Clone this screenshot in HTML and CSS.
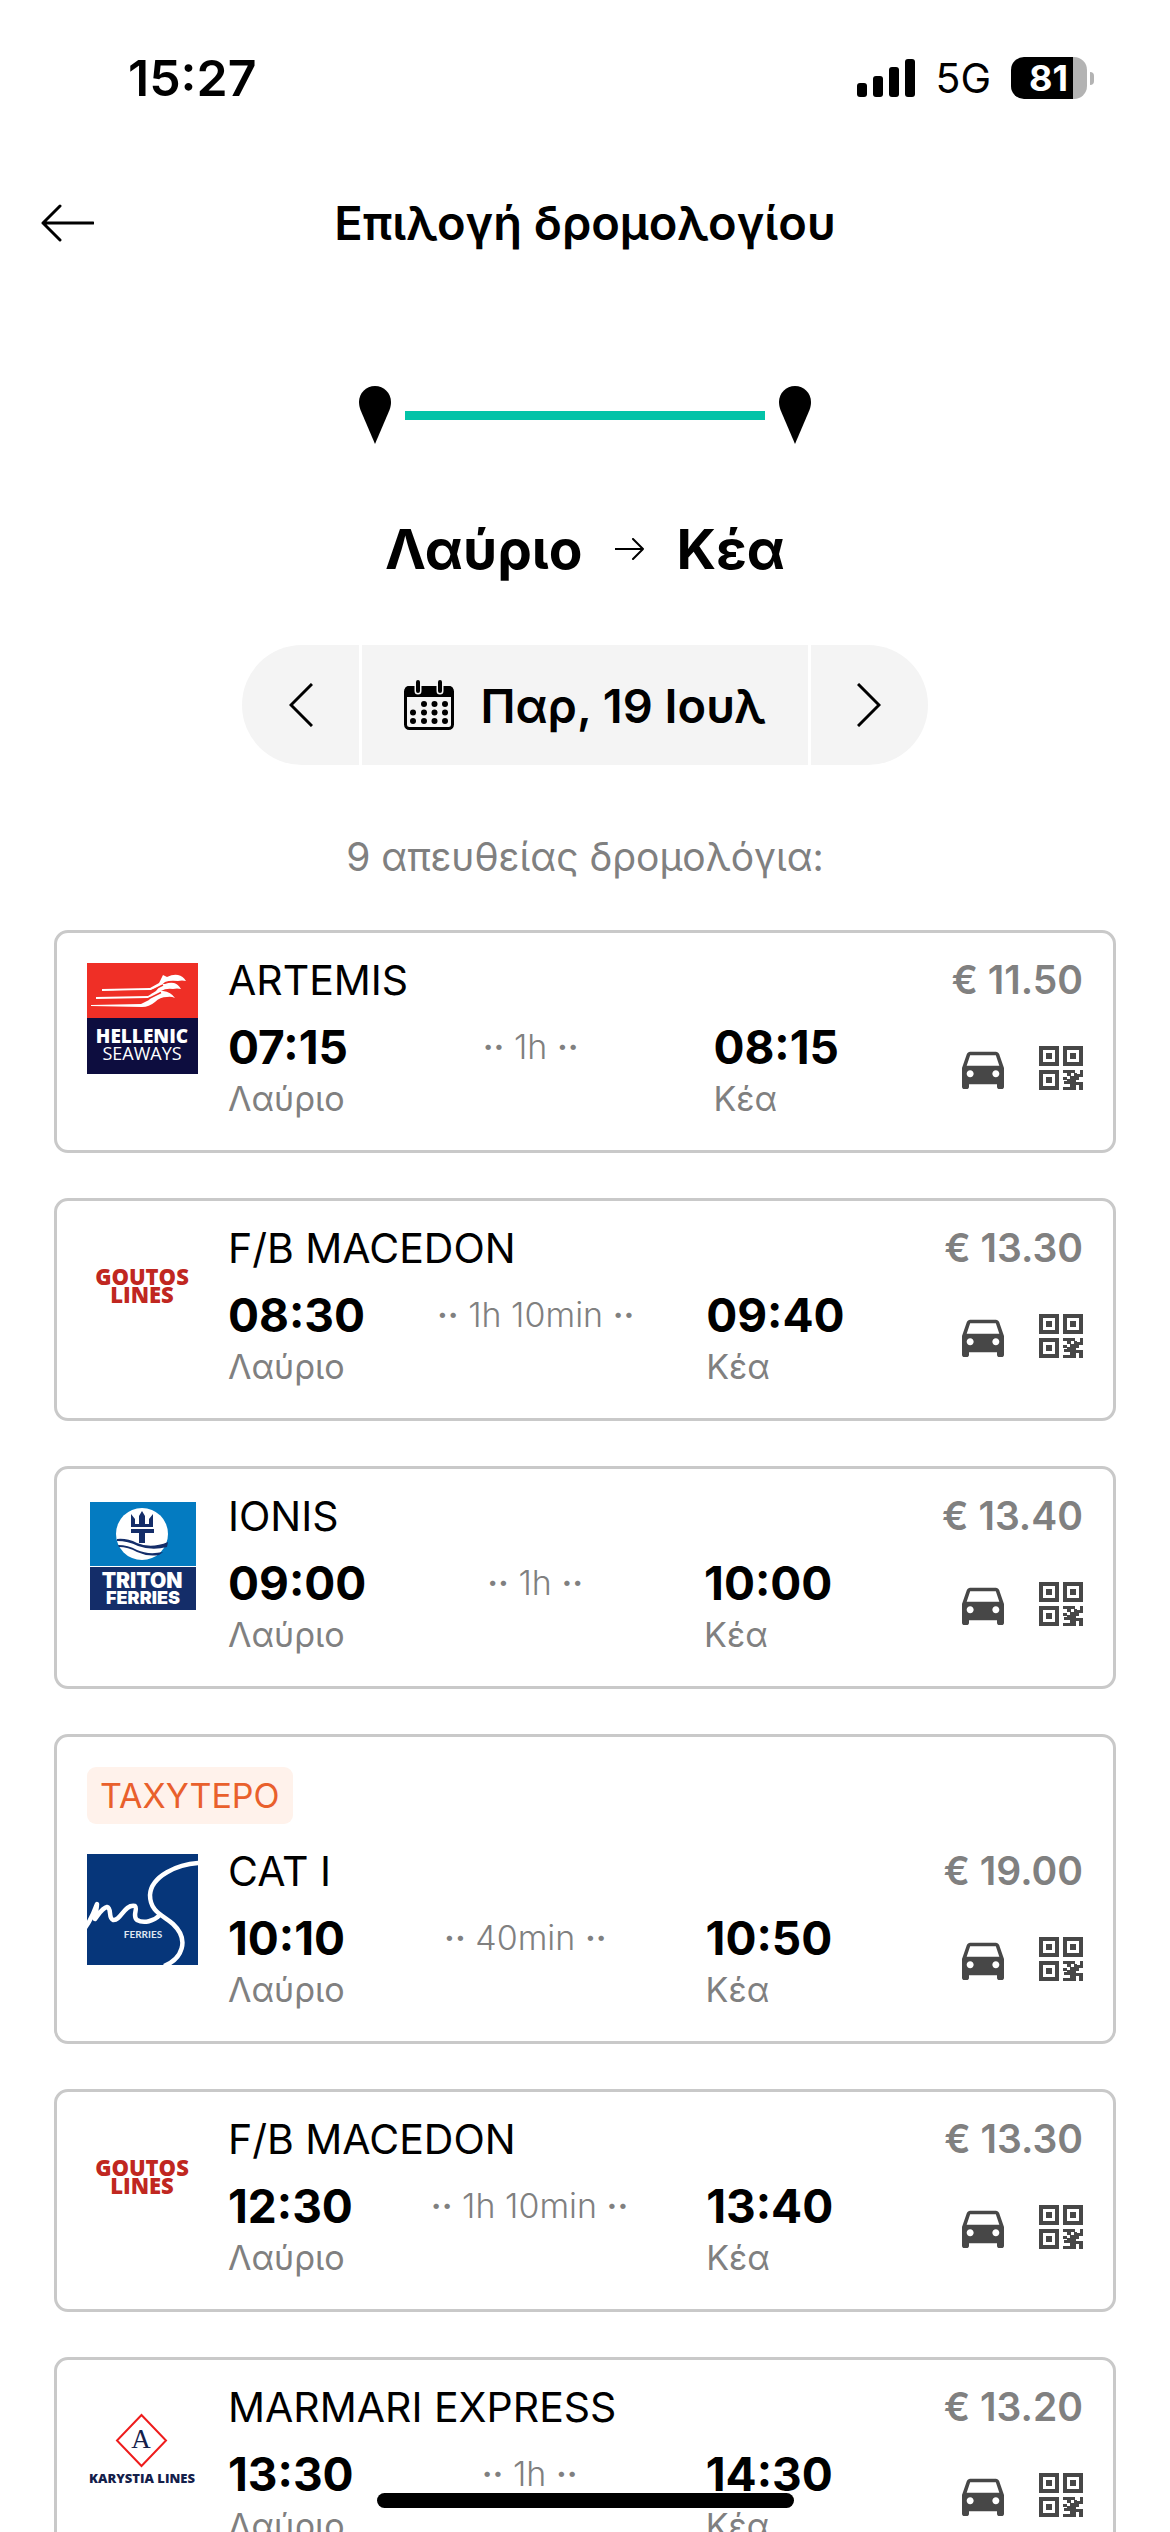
FILE: index.html
```html
<!DOCTYPE html>
<html lang="el">
<head>
<meta charset="utf-8">
<meta name="viewport" content="width=device-width, initial-scale=1">
<title>Επιλογή δρομολογίου</title>
<link rel="stylesheet" href="styles.css">
</head>
<body>
<svg class="sprite" aria-hidden="true">
  <symbol id="car" viewBox="0 0 24 24"><path d="M18.92 6.01C18.72 5.42 18.16 5 17.5 5h-11c-.66 0-1.21.42-1.42 1.01L3 12v8c0 .55.45 1 1 1h1c.55 0 1-.45 1-1v-1h12v1c0 .55.45 1 1 1h1c.55 0 1-.45 1-1v-8l-2.08-5.99zM6.5 16c-.83 0-1.5-.67-1.5-1.5S5.67 13 6.5 13s1.5.67 1.5 1.5S7.33 16 6.5 16zm11 0c-.83 0-1.5-.67-1.5-1.5s.67-1.5 1.5-1.5 1.5.67 1.5 1.5-.67 1.5-1.5 1.5zM5 11l1.500-4.500h11L19 11H5z"/></symbol>
  <symbol id="qr" viewBox="0 0 44 44">
    <path fill-rule="evenodd" d="M0 0h20v20H0zM4 4v12h12V4zM7 7h6v6H7zM24 0h20v20H24zM28 4v12h12V4zM31 7h6v6h-6zM0 24h20v20H0zM4 28v12h12V28zM7 31h6v6H7z"/>
    <path d="M24 24h12v3h2v1h3v-4h3v7h-4v3h-3v2h7v8h-4v-5h-3v5H24v-3h7v-3h-6v-3h3v-2h3v-3h4v-3h-3v3h-4v-3h-4zM24 31h4v3h-4z"/>
  </symbol>
</svg>

<div class="app">
  <div class="status">
    <span class="status-time">15:27</span>
    <div class="status-right">
      <svg class="signal" viewBox="0 0 58 38"><rect x="0" y="24" width="10" height="14" rx="3"/><rect x="16" y="17" width="10" height="21" rx="3"/><rect x="32" y="8" width="10" height="30" rx="3"/><rect x="48" y="0" width="10" height="38" rx="3"/></svg>
      <span class="network">5G</span>
      <div class="battery"><span class="battery-body">81</span><span class="battery-tip"></span></div>
    </div>
  </div>

  <header class="header">
    <button class="back" type="button" aria-label="Πίσω"><svg class="back-icon" viewBox="0 0 54 38"><path d="M53 19H3M20 2 3 19l17 17"/></svg></button>
    <h1 class="title">Επιλογή δρομολογίου</h1>
  </header>

  <main class="main">
    <div class="progress">
      <svg class="pin" viewBox="0 0 32 58"><path d="M16 0C7 0 0 7 0 16c0 3 .5 5 1.500 8L16 58l14.500-34c1-3 1.500-5 1.500-8C32 7 25 0 16 0z"/></svg>
      <span class="progress-line"></span>
      <svg class="pin" viewBox="0 0 32 58"><path d="M16 0C7 0 0 7 0 16c0 3 .5 5 1.500 8L16 58l14.500-34c1-3 1.500-5 1.500-8C32 7 25 0 16 0z"/></svg>
    </div>

    <h2 class="route">
      <span>Λαύριο</span>
      <svg class="route-arrow" viewBox="0 0 30 22"><path d="M0 11h28M18 1l10 10-10 10"/></svg>
      <span>Κέα</span>
    </h2>

    <div class="dates">
      <button class="date-step" type="button" aria-label="Προηγούμενη ημέρα"><svg class="chevron" viewBox="0 0 24 44"><path d="M23 1 2 22l21 21"/></svg></button>
      <button class="date-pick" type="button">
        <svg class="calendar" viewBox="0 0 50 50">
          <rect x="1.500" y="7.500" width="47" height="41" rx="4" fill="none" stroke="#000" stroke-width="3"/>
          <path d="M1 17V10q0-4 4-4h40q4 0 4 4v7z"/>
          <path d="M14 2v9M36 2v9" stroke="#f4f4f4" stroke-width="7" stroke-linecap="round"/>
          <path d="M14 2v9M36 2v9" stroke="#000" stroke-width="4" stroke-linecap="round"/>
          <g><circle cx="20" cy="24" r="3"/><circle cx="30.500" cy="24" r="3"/><circle cx="41" cy="24" r="3"/><circle cx="9" cy="32.500" r="3"/><circle cx="20" cy="32.500" r="3"/><circle cx="30.500" cy="32.500" r="3"/><circle cx="41" cy="32.500" r="3"/><circle cx="9" cy="41" r="3"/><circle cx="20" cy="41" r="3"/><circle cx="30.500" cy="41" r="3"/><circle cx="41" cy="41" r="3"/></g>
        </svg>
        <span>Παρ, 19 Ιουλ</span>
      </button>
      <button class="date-step" type="button" aria-label="Επόμενη ημέρα"><svg class="chevron" viewBox="0 0 24 44"><path d="m1 1 21 21L1 43"/></svg></button>
    </div>

    <p class="count">9 απευθείας δρομολόγια:</p>

    <ul class="trips">
      <li><a class="card" href="#artemis"><div class="trip">
        <svg class="logo" viewBox="0 0 111 111" role="img" aria-label="Hellenic Seaways">
          <rect width="111" height="56" fill="#ef2f26"/><rect y="55" width="111" height="56" fill="#0d0d3f"/>
          <g fill="#fff">
            <path d="M15 26l48-1 9-5q3-6 3-6l1-2 4 2q6-3 11-2 5 1 8 6-4-1-8 0-8-1-13 1-6 6-14 8l-49 1z"/>
            <path d="M9 34l52-1 8-5q3-3 4-7l5 0q5-2 9-1 4 1 7 6-4-1-8 0-7-1-12 2-6 5-13 7l-52 1z"/>
            <path d="M4 42l50-1 8-4q3-4 2-6 6-1 8-3 3 0 4 0 8 1 12 7-4-2-8-1-7 0-12 5-6 5-13 5l-51-1z"/>
          </g>
          <path d="M13 29l51-1 12-6M8 37.500l52-1 14-7" stroke="#ef2f26" stroke-width="1.500" fill="none"/>
          <g class="logo-hellenic"><text class="logo-strong" x="55" y="80">HELLENIC</text><text x="55" y="97">SEAWAYS</text></g>
        </svg>
        <div class="info">
          <h3 class="ship">ARTEMIS</h3>
          <div class="times">
            <div><time class="time">07:15</time><span class="port">Λαύριο</span></div>
            <span class="duration"><b>··</b> 1h <b>··</b></span>
            <div class="arrival"><time class="time">08:15</time><span class="port">Κέα</span></div>
          </div>
        </div>
        <div class="side"><span class="price">€ 11.50</span><span class="features"><svg class="car"><use href="#car"/></svg><svg class="qr"><use href="#qr"/></svg></span></div>
      </div></a></li>

      <li><a class="card" href="#macedon-0830"><div class="trip">
        <svg class="logo logo-goutos" viewBox="0 0 111 111" role="img" aria-label="Goutos Lines"><text x="55" y="54">GOUTOS</text><text x="55" y="72">LINES</text></svg>
        <div class="info">
          <h3 class="ship">F/B MACEDON</h3>
          <div class="times">
            <div><time class="time">08:30</time><span class="port">Λαύριο</span></div>
            <span class="duration"><b>··</b> 1h 10min <b>··</b></span>
            <div class="arrival"><time class="time">09:40</time><span class="port">Κέα</span></div>
          </div>
        </div>
        <div class="side"><span class="price">€ 13.30</span><span class="features"><svg class="car"><use href="#car"/></svg><svg class="qr"><use href="#qr"/></svg></span></div>
      </div></a></li>

      <li><a class="card" href="#ionis"><div class="trip">
        <svg class="logo" viewBox="0 0 111 111" role="img" aria-label="Triton Ferries">
          <rect x="3" y="3" width="106" height="64" fill="#047bc1"/><rect x="3" y="68" width="106" height="43" fill="#142d69"/>
          <circle cx="55" cy="35" r="26" fill="#fff"/>
          <g fill="#142d69">
            <path d="M44 15l4 5v5h4v-8l3-5 3 5v8h4v-5l4-5v13H44zM44 30h23v4h-9v10h-6V34h-8z"/>
            <path d="M30 40q10-1 20 4 14 6 31-1l-1 5q-15 4-29-1-10-5-21-5z"/>
            <path d="M31 46q10 0 19 5 11 5 26 2l-4 3q-11 2-22-3-9-5-18-5z"/>
          </g>
          <g class="logo-triton"><text class="logo-large" x="55" y="89">TRITON</text><text x="56" y="105">FERRIES</text></g>
        </svg>
        <div class="info">
          <h3 class="ship">IONIS</h3>
          <div class="times">
            <div><time class="time">09:00</time><span class="port">Λαύριο</span></div>
            <span class="duration"><b>··</b> 1h <b>··</b></span>
            <div class="arrival"><time class="time">10:00</time><span class="port">Κέα</span></div>
          </div>
        </div>
        <div class="side"><span class="price">€ 13.40</span><span class="features"><svg class="car"><use href="#car"/></svg><svg class="qr"><use href="#qr"/></svg></span></div>
      </div></a></li>

      <li><a class="card" href="#cat-i"><span class="badge">ΤΑΧΥΤΕΡΟ</span><div class="trip">
        <svg class="logo" viewBox="0 0 111 111" role="img" aria-label="MS Ferries">
          <rect width="111" height="111" fill="#06367a"/>
          <path d="M112 9C91 10 64 22 63 41c0 17 13 20 23 29 17 16 9 35-9 42M-2 74C4 66 7 58 10 50c0 5-2 10-2 15 4-5 7-11 12-12 5 1 1 11 6 13 8 1 11-16 22-14 3 3-3 10 2 14 7 4 17 1 23-5" fill="none" stroke="#fff" stroke-width="4.500" stroke-linejoin="round"/>
          <text class="logo-ms" x="56" y="84">FERRIES</text>
        </svg>
        <div class="info">
          <h3 class="ship">CAT I</h3>
          <div class="times">
            <div><time class="time">10:10</time><span class="port">Λαύριο</span></div>
            <span class="duration"><b>··</b> 40min <b>··</b></span>
            <div class="arrival"><time class="time">10:50</time><span class="port">Κέα</span></div>
          </div>
        </div>
        <div class="side"><span class="price">€ 19.00</span><span class="features"><svg class="car"><use href="#car"/></svg><svg class="qr"><use href="#qr"/></svg></span></div>
      </div></a></li>

      <li><a class="card" href="#macedon-1230"><div class="trip">
        <svg class="logo logo-goutos" viewBox="0 0 111 111" role="img" aria-label="Goutos Lines"><text x="55" y="54">GOUTOS</text><text x="55" y="72">LINES</text></svg>
        <div class="info">
          <h3 class="ship">F/B MACEDON</h3>
          <div class="times">
            <div><time class="time">12:30</time><span class="port">Λαύριο</span></div>
            <span class="duration"><b>··</b> 1h 10min <b>··</b></span>
            <div class="arrival"><time class="time">13:40</time><span class="port">Κέα</span></div>
          </div>
        </div>
        <div class="side"><span class="price">€ 13.30</span><span class="features"><svg class="car"><use href="#car"/></svg><svg class="qr"><use href="#qr"/></svg></span></div>
      </div></a></li>

      <li><a class="card" href="#marmari"><div class="trip">
        <svg class="logo" viewBox="0 0 111 111" role="img" aria-label="Karystia Lines">
          <path d="M54.500 25 79 50.500 54.500 76 30 50.500z" fill="none" stroke="#ee1c1c" stroke-width="2"/>
          <text class="logo-letter" x="54" y="58">A</text>
          <text class="logo-karystia" x="55" y="93">KARYSTIA LINES</text>
        </svg>
        <div class="info">
          <h3 class="ship">MARMARI EXPRESS</h3>
          <div class="times">
            <div><time class="time">13:30</time><span class="port">Λαύριο</span></div>
            <span class="duration"><b>··</b> 1h <b>··</b></span>
            <div class="arrival"><time class="time">14:30</time><span class="port">Κέα</span></div>
          </div>
        </div>
        <div class="side"><span class="price">€ 13.20</span><span class="features"><svg class="car"><use href="#car"/></svg><svg class="qr"><use href="#qr"/></svg></span></div>
      </div></a></li>
    </ul>
  </main>
</div>
<div class="home-bar"></div>
</body>
</html>
```
FILE: styles.css
```css
* { box-sizing: border-box; }
body {
  margin: 0;
  background: #fff;
  color: #000;
  font-family: Inter, "Liberation Sans", sans-serif;
}
h1, h2, h3, p, ul { margin: 0; padding: 0; }
ul { list-style: none; }
button { border: 0; padding: 0; font: inherit; color: inherit; background: none; }
svg { display: block; flex: none; }
.sprite { position: absolute; width: 0; height: 0; }

.app { display: flex; flex-direction: column; height: 100vh; overflow: hidden; }

/* Status bar */
.status {
  display: flex;
  align-items: center;
  justify-content: space-between;
  flex: none;
  height: 156px;
  padding: 0 76px 0 128px;
}
.status-time { font-size: 50px; font-weight: 600; }
.status-right { display: flex; align-items: center; gap: 20px; }
.signal { width: 58px; height: 38px; }
.network { font-size: 41px; line-height: 48px; }
.battery { display: flex; align-items: center; gap: 3px; }
.battery-body {
  width: 76px;
  height: 42px;
  padding-right: 1px;
  border-radius: 13px;
  background: linear-gradient(to right, #000 62px, #b3b3b3 62px);
  color: #fff;
  font-size: 36px;
  font-weight: 700;
  line-height: 42px;
  text-align: center;
}
.battery-tip { width: 4px; height: 13px; border-radius: 0 6px 6px 0; background: #b3b3b3; }

/* Header */
.header {
  display: grid;
  grid-template-columns: 1fr auto 1fr;
  align-items: center;
  flex: none;
  height: 134px;
  padding: 0 40px;
}
.back { justify-self: start; }
.back-icon { width: 54px; height: 38px; fill: none; stroke: #000; stroke-width: 3; stroke-linecap: round; stroke-linejoin: round; }
.title { font-size: 47px; font-weight: 600; line-height: 56px; }

.main { flex: 1; min-height: 0; padding: 96px 54px 0; overflow-y: auto; scrollbar-width: none; }

.progress { display: flex; align-items: center; justify-content: center; gap: 14px; }
.pin { width: 32px; height: 58px; }
.progress-line { width: 360px; height: 9px; background: #03c3a8; }

.route {
  display: flex;
  align-items: center;
  justify-content: center;
  gap: 32px;
  margin-top: 72px;
  font-size: 55px;
  font-weight: 700;
  line-height: 66px;
}
.route-arrow { width: 30px; height: 22px; fill: none; stroke: #000; stroke-width: 2; stroke-linecap: round; stroke-linejoin: round; }

/* Date selector */
.dates {
  display: flex;
  gap: 3px;
  width: fit-content;
  margin: 63px auto 0;
  border-radius: 60px;
  overflow: hidden;
}
.date-step, .date-pick { display: flex; align-items: center; justify-content: center; height: 120px; background: #f4f4f4; }
.date-step { width: 117px; }
.date-pick { gap: 26px; padding: 0 42px; font-size: 47px; font-weight: 600; }
.chevron { width: 24px; height: 44px; fill: none; stroke: #000; stroke-width: 3; }
.calendar { width: 50px; height: 50px; overflow: visible; }

.count { margin-top: 68px; color: #808080; font-size: 39px; line-height: 48px; text-align: center; }

/* Trips */
.trips { display: flex; flex-direction: column; gap: 45px; margin-top: 49px; }
.card {
  display: flex;
  flex-direction: column;
  align-items: stretch;
  gap: 24px;
  padding: 24px 30px 30px;
  border: 3px solid #c9c9c9;
  border-radius: 14px;
  color: inherit;
  text-decoration: none;
}
.badge {
  align-self: flex-start;
  margin-top: 6px;
  padding: 0 13px;
  border-radius: 9px;
  background: #fff2eb;
  color: #e9602c;
  font-size: 34px;
  line-height: 57px;
}
.trip { display: flex; }
.logo { width: 111px; height: 111px; margin-top: 6px; }
.info { flex: 1; min-width: 0; padding-left: 30px; }
.ship { font-size: 41px; font-weight: 400; line-height: 46px; white-space: nowrap; }
.times { display: flex; margin-top: 14px; }
.time { display: block; font-size: 46px; font-weight: 700; line-height: 60px; }
.port { display: block; color: #808080; font-size: 34px; line-height: 44px; }
.duration { flex: 1; color: #808080; font-size: 34px; font-weight: 300; line-height: 60px; text-align: center; }
.duration b { font-weight: 600; }
.arrival { width: 238px; }
.side { display: flex; flex-direction: column; align-items: flex-end; }
.price { color: #808080; font-size: 39px; font-weight: 600; line-height: 46px; }
.features { display: flex; align-items: center; gap: 28px; margin-top: 37px; fill: #474747; }
.car { width: 56px; height: 56px; }
.qr { width: 44px; height: 44px; }
.card { padding-bottom: 29px; }

/* Company logos */
.logo text { text-anchor: middle; }
.logo-hellenic { fill: #fff; font: 500 18px "Open Sans", sans-serif; }
.logo-hellenic .logo-strong { font-weight: 800; font-size: 19px; }
.logo-goutos { fill: #c02720; font: 800 22px "Open Sans", sans-serif; }
.logo-triton { fill: #fff; font: 900 18px Inter, sans-serif; }
.logo-triton .logo-large { font-size: 21px; }
.logo-ms { fill: #dfe6f2; font: 700 10px Lato, sans-serif; }
.logo-letter { fill: #14204a; font: 27px "Liberation Serif", serif; }
.logo-karystia { fill: #14204a; font: 800 13px "Open Sans", sans-serif; }

.home-bar {
  position: fixed;
  bottom: 24px;
  left: 50%;
  width: 417px;
  height: 15px;
  margin-left: -208px;
  border-radius: 8px;
  background: #000;
}
```
